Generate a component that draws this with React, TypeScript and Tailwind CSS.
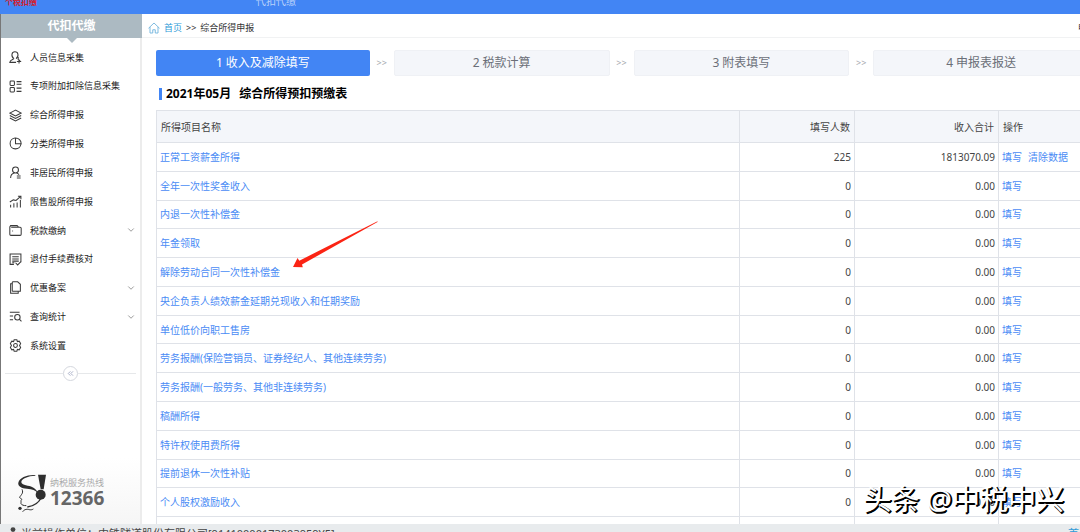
import { Fragment, ReactNode } from "react";
import { ChevronDown, ChevronsLeft } from "lucide-react";

type MenuItem = { label: string; icon: ReactNode; expandable?: boolean };

const menu: MenuItem[] = [
  {
    label: "人员信息采集",
    icon: (
      <>
        <path d="M9 14c-3-2-4-5-3.500-8C6 3 8.500 1.500 11 1.500S16 3 16.500 6c.5 3-.5 6-3.500 8" />
        <path d="M9 14c0 2-7 2-7.500 7H13M17 11v5c2 .5 3 1 3.500 2M14.500 19.500h8M18.500 16v7" />
      </>
    ),
  },
  {
    label: "专项附加扣除信息采集",
    icon: (
      <>
        <rect x="2" y="2" width="8" height="8" rx="1.500" />
        <rect x="2" y="14" width="8" height="8" rx="1.500" />
        <path d="M14 3h9M14 8h9M14 15h9M14 21h9" />
      </>
    ),
  },
  {
    label: "综合所得申报",
    icon: (
      <>
        <path d="M12 2 1.500 7.500 12 13l10.500-5.500z" />
        <path d="M1.500 12 12 17.500 22.500 12M1.500 16.500 12 22l10.500-5.500" />
      </>
    ),
  },
  {
    label: "分类所得申报",
    icon: (
      <>
        <path d="M11 2a10 10 0 1 0 11 11" />
        <path d="M12 2v10.500h10.500C22.500 6 18 2 12 2z" />
      </>
    ),
  },
  {
    label: "非居民所得申报",
    icon: (
      <>
        <circle cx="12" cy="7.500" r="5.500" />
        <path d="M3 22c0-5 3-8 7-9M14 13c2 .5 3.500 1.500 4.500 3M14.500 18.500h7M14.500 22h7" />
      </>
    ),
  },
  {
    label: "限售股所得申报",
    icon: (
      <>
        <path d="M3 18v5M9 15v8M15 14v9M21 9v14" />
        <path d="M1.500 13 8 9l5 1 8-7M16.500 2.500H22V8" />
      </>
    ),
  },
  {
    label: "税款缴纳",
    expandable: true,
    icon: (
      <>
        <path d="M4 6h16.500a2 2 0 0 1 2 2v11a2 2 0 0 1-2 2h-17a2 2 0 0 1-2-2V5.500L3 3h12l3 3" />
        <path d="M6 13h1.500" />
      </>
    ),
  },
  {
    label: "退付手续费核对",
    icon: (
      <>
        <path d="M9 21H2V2h20v15M6 7h12M6 11h12M6 15h12M6 18h4" />
        <path d="m12 18 4 4 6-6" />
      </>
    ),
  },
  {
    label: "优惠备案",
    expandable: true,
    icon: (
      <>
        <path d="M7 1.500h9L21 6v13H7a1 1 0 0 1-1-1V2.500z" />
        <path d="M6 5H3v17.500h14V19" />
      </>
    ),
  },
  {
    label: "查询统计",
    expandable: true,
    icon: (
      <>
        <path d="M1.500 4h18M1.500 11h6M1.500 18h6" />
        <circle cx="15.500" cy="13.500" r="5" />
        <path d="m19 17 4 4" />
      </>
    ),
  },
  {
    label: "系统设置",
    icon: (
      <>
        <path d="M9.500 1.500h5l1 3.200 3.300-.7 2.700 4.300L19.500 12l2 3.700-2.700 4.300-3.300-.7-1 3.200h-5l-1-3.200-3.300.7-2.700-4.300 2-3.700-2-3.700L5.200 4l3.300.7z" />
        <circle cx="12" cy="12" r="3.500" />
      </>
    ),
  },
];

const steps = ["1 收入及减除填写", "2 税款计算", "3 附表填写", "4 申报表报送"];

const rows = [
  { name: "正常工资薪金所得", count: "225", total: "1813070.09", clearable: true },
  { name: "全年一次性奖金收入", count: "0", total: "0.00" },
  { name: "内退一次性补偿金", count: "0", total: "0.00" },
  { name: "年金领取", count: "0", total: "0.00" },
  { name: "解除劳动合同一次性补偿金", count: "0", total: "0.00" },
  { name: "央企负责人绩效薪金延期兑现收入和任期奖励", count: "0", total: "0.00" },
  { name: "单位低价向职工售房", count: "0", total: "0.00" },
  { name: "劳务报酬(保险营销员、证券经纪人、其他连续劳务)", count: "0", total: "0.00" },
  { name: "劳务报酬(一般劳务、其他非连续劳务)", count: "0", total: "0.00" },
  { name: "稿酬所得", count: "0", total: "0.00" },
  { name: "特许权使用费所得", count: "0", total: "0.00" },
  { name: "提前退休一次性补贴", count: "0", total: "0.00" },
  { name: "个人股权激励收入", count: "0", total: "0.00" },
];

function Sidebar() {
  return (
    <aside className="flex w-[142px] shrink-0 flex-col border-l border-[#777] bg-white">
      <h1 className="relative flex h-6 shrink-0 items-center justify-center bg-[#acbac2] text-[12px] font-bold text-white">
        代扣代缴
        <span className="absolute top-full left-1/2 -translate-x-1/2 border-x-5 border-t-5 border-x-transparent border-t-[#acbac2]" />
      </h1>
      <div className="flex min-h-0 flex-1 flex-col border-r-2 border-[#ececec] pt-[5px]">
        <nav className="flex h-[317px] shrink-0 flex-col">
          {menu.map((item) => (
            <button
              key={item.label}
              className="flex flex-1 items-center gap-2 pr-1 pl-2 text-left text-[9px] text-[#222]"
            >
              <svg
                viewBox="0 0 24 24"
                className="size-[13px] shrink-0"
                fill="none"
                stroke="#3a3a3a"
                strokeWidth="1.900"
              >
                {item.icon}
              </svg>
              <span className="flex-1 whitespace-nowrap">{item.label}</span>
              {item.expandable && <ChevronDown size={10} className="text-[#888]" />}
            </button>
          ))}
        </nav>
        <div className="flex h-[26px] shrink-0 items-center px-1">
          <span className="h-px flex-1 bg-[#e6e8ea]" />
          <button
            aria-label="收起"
            className="flex size-[15px] items-center justify-center rounded-full border border-[#d4d7de] text-[#8c96b5]"
          >
            <ChevronsLeft size={9} />
          </button>
          <span className="h-px flex-1 bg-[#e6e8ea]" />
        </div>
        <div className="mt-auto flex items-start gap-1 bg-linear-to-b from-white to-[#f6f6f6] pt-4 pb-3 pl-[17px]">
          <svg viewBox="0 0 84 114" className="h-[38px] w-[28px]" fill="none" stroke="#2e2e2e">
            <path d="M52 3C30 1 4 10 1 26c-2 9 8 17 26 18 16 1 26 5 32 12-4-12-16-19-30-21C16 33 9 30 10 23 12 13 30 6 52 5z" fill="#2e2e2e" stroke="none" />
            <path
              d="M12 46c3 6 2 11-1 15-3 5-7 8-6 10s6 2 6 5-3 3-2 6-1 4 0 7c2 4 8 6 16 6"
              strokeWidth="3"
            />
            <path d="M70 70C64 84 50 96 28 99" strokeWidth="4" />
            <path d="M14 113c6-8 14-8 20-6 6 1 9 0 12-2" strokeWidth="3" />
            <circle cx="6" cy="103" r="5" fill="#2e2e2e" stroke="none" />
            <path d="M60 2h24l-7 44h-9z" fill="#2e2e2e" stroke="none" />
            <circle cx="68" cy="62" r="15" fill="#2e2e2e" stroke="none" />
          </svg>
          <div>
            <p className="pt-1 text-[9px] leading-[10px] text-[#aaa]">纳税服务热线</p>
            <p className="text-[19px] leading-5 font-bold text-[#666]">12366</p>
          </div>
        </div>
      </div>
    </aside>
  );
}

function Steps() {
  return (
    <div className="-mr-[9px] flex">
      {steps.map((step, i) => (
        <Fragment key={step}>
          {i > 0 && (
            <span className="flex w-6 items-center justify-center text-[9px] text-[#a5a8ae]">&gt;&gt;</span>
          )}
          <button
            className={
              i === 0
                ? "h-[26px] flex-1 rounded-xs bg-[#4285f4] text-[12px] text-white"
                : "h-[26px] flex-1 rounded-xs border border-[#eff1f5] bg-[#f4f6fa] text-[12px] text-[#6b6f78]"
            }
          >
            {step}
          </button>
        </Fragment>
      ))}
    </div>
  );
}

function IncomeTable() {
  return (
    <div className="relative -mr-[9px]">
      <table className="h-[436px] w-full table-fixed border-collapse text-[10px] leading-4 text-[#444] [&_td]:border [&_td]:border-[#dfe2e8] [&_td]:px-[3px] [&_td]:py-0 [&_th]:border [&_th]:border-[#dfe2e8] [&_th]:px-1 [&_th]:py-0 [&_th]:font-normal">
        <colgroup>
          <col />
          <col className="w-[115px]" />
          <col className="w-[144px]" />
          <col className="w-[90px]" />
        </colgroup>
        <thead>
          <tr className="h-8 bg-[#f4f6fa]">
            <th className="text-left">所得项目名称</th>
            <th className="text-right">填写人数</th>
            <th className="text-right">收入合计</th>
            <th className="text-left">操作</th>
          </tr>
        </thead>
        <tbody>
          {rows.map((row) => (
            <tr key={row.name} className="h-7">
              <td>
                <a href="#" className="text-[#4a8bf5]">{row.name}</a>
              </td>
              <td className="text-right">{row.count}</td>
              <td className="text-right">{row.total}</td>
              <td>
                <div className="flex gap-[6px] text-[#4a8bf5]">
                  <a href="#">填写</a>
                  {row.clearable && <a href="#">清除数据</a>}
                </div>
              </td>
            </tr>
          ))}
          <tr className="h-7">
            <td />
            <td />
            <td />
            <td />
          </tr>
        </tbody>
      </table>
      <svg viewBox="0 0 90 50" className="absolute top-[108px] left-[134px] h-[50px] w-[90px]">
        <path d="M3 49 7.500 40l1.800 2.700L87.500 3.200v.8L12 46.500l.8 2.800z" fill="#fb2414" />
      </svg>
    </div>
  );
}

export default function App() {
  return (
    <div className="relative flex h-screen flex-col overflow-hidden bg-white font-['Noto_Sans','Noto_Sans_CJK_SC',sans-serif]">
      <header className="flex h-[14px] shrink-0 overflow-hidden bg-[#4285f4] text-[10px] leading-3">
        <span className="-mt-1 w-64 pl-[5px] text-[8px] font-bold text-[#d3202f]">个税扣缴</span>
        <span className="-mt-[5px] text-[#b9d2fb]">代扣代缴</span>
      </header>
      <div className="flex min-h-0 flex-1">
        <Sidebar />
        <main className="flex min-w-0 flex-1 flex-col overflow-hidden">
          <div className="flex h-6 shrink-0 items-center gap-1 border-b border-[#f1f2f3] pt-1 pl-[6px] text-[9px] text-[#333]">
            <svg viewBox="0 0 24 24" className="size-3" fill="none" stroke="#6fb3dc" strokeWidth="1.800">
              <path d="M1 12.500 12 2l11 10.500M4 10v12h5.500v-6.500h5V22H20V10" />
            </svg>
            <a href="#" className="text-[#2f9bd8]">首页</a>
            <span>&gt;&gt;</span>
            <span>综合所得申报</span>
            <span className="-mr-[7px] ml-auto">申</span>
          </div>
          <div className="pt-3 pl-[14px]">
            <Steps />
            <h2 className="flex h-[34px] items-center gap-2 pt-px pl-[3px] text-[12px] font-bold text-black">
              <span className="-mr-1 h-3 w-[3px] bg-[#4285f4]" />
              <span>2021年05月</span>
              <span>综合所得预扣预缴表</span>
            </h2>
            <IncomeTable />
          </div>
        </main>
      </div>
      <footer className="flex h-2 shrink-0 items-start justify-between overflow-hidden bg-[#e8ebed] pt-[2px] pr-[1px] pl-[9px] text-[11px] leading-4 text-[#444]">
        <span className="flex items-start gap-1">
          <svg viewBox="0 0 10 14" className="h-3 w-2" fill="#444">
            <circle cx="5" cy="4" r="3" />
            <path d="M0 14c0-5 2-7 5-7s5 2 5 7z" />
          </svg>
          当前操作单位：中铁隧道股份有限公司[91410000173003959Y5]
        </span>
        <span className="text-[#2f9bd8]">首</span>
      </footer>
      <div className="absolute right-4 bottom-[13px] text-[28px] leading-10 text-white [text-shadow:1px_2px_0_#000,2px_1px_0_#000]">
        头条 @中税中兴
      </div>
    </div>
  );
}
